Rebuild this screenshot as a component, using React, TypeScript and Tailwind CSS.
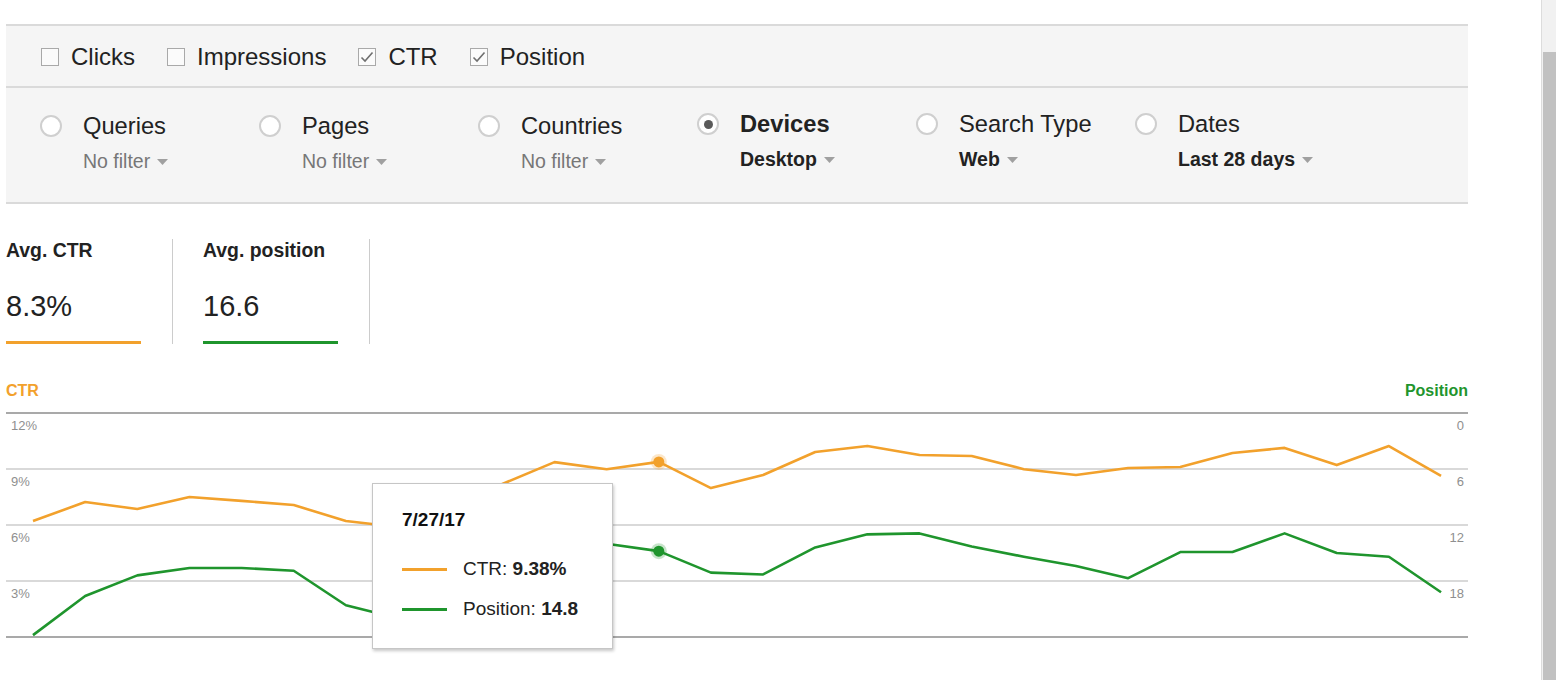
import React from "react";

const ORANGE = "#f2a12c";
const GREEN = "#1f952d";

// daily values for the last 28 days
const ctr = [
  6.21, 7.23, 6.86, 7.5, 7.29, 7.07, 6.21, 5.89, 7.02, 8.2, 9.37, 8.99, 9.38, 7.98,
  8.68, 9.91, 10.23, 9.75, 9.7, 8.99, 8.68, 9.05, 9.11, 9.86, 10.13, 9.21, 10.23, 8.63,
];
const position = [
  23.8, 19.6, 17.4, 16.6, 16.6, 16.9, 20.6, 22.0, 19.0, 15.7, 14.1, 14.0, 14.8, 17.1,
  17.3, 14.4, 13.0, 12.9, 14.3, 15.4, 16.4, 17.7, 14.9, 14.9, 12.9, 15.0, 15.4, 19.2,
];

const TOP = 8;
const BOTTOM = 232;
const xAt = (i: number) => 27 + i * 52.15;
const yCtr = (v: number) => BOTTOM - (v / 12) * (BOTTOM - TOP);
const yPos = (v: number) => TOP + (v / 24) * (BOTTOM - TOP);

function Caret() {
  return (
    <svg width="11" height="6" viewBox="0 0 11 6" className="ml-[7px] mt-[2px]">
      <path d="M0 0 L11 0 L5.5 6 Z" fill="#a0a0a0" />
    </svg>
  );
}

function Checkbox({ label, checked }: { label: string; checked?: boolean }) {
  return (
    <div className="flex items-center gap-[12px]">
      <div className="w-[18px] h-[18px] border border-[#a9a9a9] bg-[#fbfbfb] flex items-center justify-center">
        {checked && (
          <svg width="14" height="12" viewBox="0 0 14 12">
            <path d="M1.5 6.5 L5 10 L12.5 1.5" fill="none" stroke="#6f6f6f" strokeWidth="1.6" />
          </svg>
        )}
      </div>
      <span className="text-[24px] leading-[28px] text-[#222]">{label}</span>
    </div>
  );
}

function FilterColumn({
  label,
  value,
  selected,
  active,
}: {
  label: string;
  value: string;
  selected?: boolean;
  active?: boolean;
}) {
  return (
    <div className={`w-[219px] flex items-start ${active ? "pt-[22px]" : "pt-[24px]"}`}>
      <div className="h-[28px] flex items-center">
        <div className="w-[22px] h-[22px] rounded-full border-2 border-[#cfcfcf] bg-white flex items-center justify-center">
          {selected && <div className="w-[9px] h-[9px] rounded-full bg-[#5a5a5a]" />}
        </div>
      </div>
      <div className="ml-[21px] flex flex-col">
        <span className={`text-[23.7px] leading-[28px] text-[#222] ${selected ? "font-bold" : ""}`}>{label}</span>
        <div className="mt-[9px] flex items-center h-[24px]">
          <span
            className={`text-[19.5px] leading-[24px] ${active ? "font-bold text-[#222]" : "text-[#777]"}`}
          >
            {value}
          </span>
          <Caret />
        </div>
      </div>
    </div>
  );
}

function Metric({ label, value, color, last }: { label: string; value: string; color: string; last?: boolean }) {
  return (
    <div className={`flex flex-col pr-[31px] border-r border-[#cccccc] ${last ? "pl-[30px]" : ""}`}>
      <span className="text-[19.4px] leading-[22px] font-bold text-[#222]">{label}</span>
      <span className="mt-[28px] text-[29px] leading-[34px] text-[#222]">{value}</span>
      <div className="mt-[18px] w-[135px] h-[3px]" style={{ background: color }} />
    </div>
  );
}

function Chart() {
  const grid = [TOP, 64, 120, 176, BOTTOM];
  const left = ["12%", "9%", "6%", "3%"];
  const right = ["0", "6", "12", "18"];
  const ctrPts = ctr.map((v, i) => `${xAt(i)},${yCtr(v)}`).join(" ");
  const posPts = position.map((v, i) => `${xAt(i)},${yPos(v)}`).join(" ");
  const hi = 12;

  return (
    <div className="relative w-[1462px] h-[245px] mt-[5px]">
      <svg width="1462" height="245" viewBox="0 0 1462 245">
        {grid.map((y, i) => (
          <line
            key={y}
            x1="0"
            x2="1462"
            y1={y}
            y2={y}
            stroke={i === 0 || i === grid.length - 1 ? "#8c8c8c" : "#cdcdcd"}
            strokeWidth="1.5"
          />
        ))}
        {left.map((t, i) => (
          <text key={t} x="5" y={grid[i] + 16.5} fontSize="13" fill="#8f8f8f" fontFamily="Liberation Sans, Arial, sans-serif">
            {t}
          </text>
        ))}
        {right.map((t, i) => (
          <text
            key={t}
            x="1458"
            y={grid[i] + 16.5}
            fontSize="13"
            fill="#8f8f8f"
            textAnchor="end"
            fontFamily="Liberation Sans, Arial, sans-serif"
          >
            {t}
          </text>
        ))}
        <polyline points={ctrPts} fill="none" stroke={ORANGE} strokeWidth="2.6" strokeLinejoin="round" />
        <polyline points={posPts} fill="none" stroke={GREEN} strokeWidth="2.6" strokeLinejoin="round" />
        <circle cx={xAt(hi)} cy={yCtr(ctr[hi])} r="8" fill={ORANGE} opacity="0.25" />
        <circle cx={xAt(hi)} cy={yCtr(ctr[hi])} r="5.5" fill={ORANGE} />
        <circle cx={xAt(hi)} cy={yPos(position[hi])} r="8" fill={GREEN} opacity="0.25" />
        <circle cx={xAt(hi)} cy={yPos(position[hi])} r="5.5" fill={GREEN} />
      </svg>

      <div className="absolute left-[366px] top-[78px] w-[241px] h-[166px] bg-white border border-[#c6c6c6] shadow-[1px_2px_3px_rgba(0,0,0,0.22)] pl-[29px] pt-[25px]">
        <div className="text-[19px] leading-[22px] font-bold text-[#111]">7/27/17</div>
        <div className="mt-[27px] flex items-center h-[22px]">
          <div className="w-[45px] h-[3px]" style={{ background: ORANGE }} />
          <span className="ml-[16px] text-[19px] leading-[22px] text-[#222]">
            CTR: <b>9.38%</b>
          </span>
        </div>
        <div className="mt-[18px] flex items-center h-[22px]">
          <div className="w-[45px] h-[3px]" style={{ background: GREEN }} />
          <span className="ml-[16px] text-[19px] leading-[22px] text-[#222]">
            Position: <b>14.8</b>
          </span>
        </div>
      </div>
    </div>
  );
}

export default function App() {
  return (
    <div className="flex w-[1556px] h-[680px] bg-white overflow-hidden font-['Liberation_Sans',Arial,sans-serif]">
      <div className="flex-1 pl-[6px] pt-[24px]">
        <div className="w-[1462px]">
          <div className="h-[64px] bg-[#f5f5f5] border-t-2 border-b-2 border-[#dadada] flex items-center pl-[35px] pt-[2px] gap-[32px]">
            <Checkbox label="Clicks" />
            <Checkbox label="Impressions" />
            <Checkbox label="CTR" checked />
            <Checkbox label="Position" checked />
          </div>
          <div className="h-[116px] bg-[#f5f5f5] border-b-2 border-[#dadada] flex pl-[34px]">
            <FilterColumn label="Queries" value="No filter" />
            <FilterColumn label="Pages" value="No filter" />
            <FilterColumn label="Countries" value="No filter" />
            <FilterColumn label="Devices" value="Desktop" selected active />
            <FilterColumn label="Search Type" value="Web" active />
            <FilterColumn label="Dates" value="Last 28 days" active />
          </div>

          <div className="mt-[35px] flex">
            <Metric label="Avg. CTR" value="8.3%" color={ORANGE} />
            <Metric label="Avg. position" value="16.6" color={GREEN} last />
          </div>

          <div className="mt-[38px] flex justify-between h-[18px] items-center">
            <span className="text-[16px] leading-[18px] font-bold" style={{ color: ORANGE }}>
              CTR
            </span>
            <span className="text-[16px] leading-[18px] font-bold" style={{ color: GREEN }}>
              Position
            </span>
          </div>
          <Chart />
        </div>
      </div>

      <div className="w-[15px] h-full bg-[#f1f1f1] border-l border-[#dcdcdc] flex flex-col">
        <div className="h-[52px]" />
        <div className="flex-1 ml-[1px] bg-[#c1c1c1]" />
      </div>
    </div>
  );
}
